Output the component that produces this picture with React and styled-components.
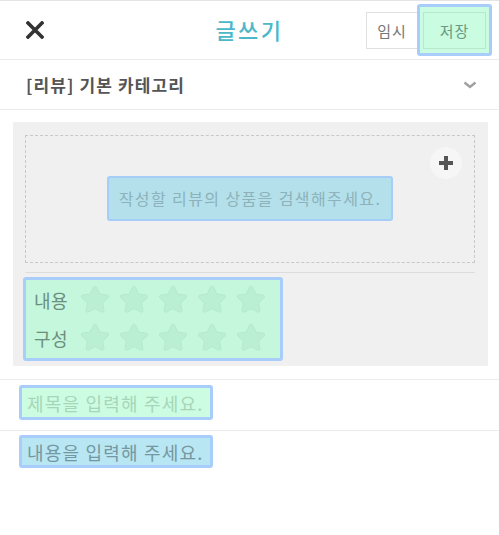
import React from "react";
import styled, { createGlobalStyle } from "styled-components";

const Global = createGlobalStyle`
  html, body { margin: 0; padding: 0; background: #fff; }
  body { font-family: "Noto Sans CJK KR", "Noto Sans", sans-serif; }
  * { box-sizing: border-box; }
`;

const Page = styled.div`
  width: 499px;
  background: #fff;
`;

const Header = styled.header`
  height: 60px;
  border-top: 1px solid #e4e4e4;
  border-bottom: 1px solid #ebebeb;
  display: grid;
  grid-template-columns: 1fr auto 1fr;
  align-items: center;
`;

const CloseButton = styled.button`
  justify-self: start;
  margin-left: 24px;
  width: 22px;
  height: 22px;
  padding: 0;
  border: 0;
  background: none;
  display: flex;
  align-items: center;
  justify-content: center;
`;

const Title = styled.h1`
  margin: 0 0 2px;
  font-size: 22px;
  font-weight: 500;
  color: #4ab8c9;
  letter-spacing: 2.5px;
`;

const Actions = styled.div`
  justify-self: end;
  margin-right: 7px;
  display: flex;
  align-items: center;
`;

const TempButton = styled.button`
  width: 51px;
  height: 37px;
  border: 1px solid #e0e0e0;
  border-right: 0;
  background: #fff;
  color: #777;
  font-family: inherit;
  font-size: 15px;
  letter-spacing: 1px;
  padding: 0;
`;

const SaveWrap = styled.div`
  width: 75px;
  height: 52px;
  border: 3px solid #a8cdfb;
  border-radius: 3px;
  background: #c9fce0;
  display: flex;
  align-items: center;
  justify-content: center;
`;

const SaveButton = styled.button`
  width: 63px;
  height: 37px;
  border: 1px solid #b7e8cc;
  background: transparent;
  color: #6a9a82;
  font-family: inherit;
  font-size: 15px;
  letter-spacing: 1px;
  padding: 0;
`;

const CategoryRow = styled.div`
  height: 50px;
  border-bottom: 1px solid #ececec;
  display: flex;
  align-items: center;
  justify-content: space-between;
  padding: 0 22px 0 26px;
`;

const CategoryText = styled.span`
  font-size: 17px;
  font-weight: 700;
  color: #555;
  letter-spacing: 1.1px;
`;

const Panel = styled.section`
  margin: 12px 11px 0 13px;
  padding: 13px 13px 5px 12px;
  background: #f0f0f0;
`;

const DropZone = styled.div`
  position: relative;
  height: 128px;
  border: 1px dashed #c8c8c8;
  display: flex;
  align-items: center;
  justify-content: center;
`;

const PlusButton = styled.button`
  position: absolute;
  top: 11px;
  right: 12px;
  width: 32px;
  height: 32px;
  border-radius: 50%;
  border: 0;
  padding: 0;
  background: #f6f6f6;
  display: flex;
  align-items: center;
  justify-content: center;
`;

const SearchBox = styled.div`
  width: 286px;
  height: 45px;
  margin-top: -2px;
  border: 2px solid #a5cdf8;
  border-radius: 3px;
  background: #b3e0ea;
  color: #8db2ba;
  font-size: 16px;
  letter-spacing: 1.4px;
  display: flex;
  align-items: center;
  justify-content: center;
`;

const Divider = styled.hr`
  margin: 9px 0 4px;
  border: 0;
  border-top: 1px solid #dcdcdc;
`;

const RatingBox = styled.div`
  width: 260px;
  margin-left: -2px;
  padding: 1px 0 1px 8px;
  border: 3px solid #a8cdfb;
  border-radius: 3px;
  background: #c4f7dc;
`;

const RatingRow = styled.div`
  height: 38px;
  display: flex;
  align-items: center;
`;

const RatingLabel = styled.span`
  width: 45px;
  font-size: 18px;
  letter-spacing: 0.5px;
  color: #6c8e7e;
`;

const Stars = styled.div`
  display: flex;
  gap: 5px;
  margin-left: -1px;
`;

const Field = styled.div`
  height: ${(p) => p.$h}px;
  margin-top: ${(p) => p.$mt || 0}px;
  border-top: 1px solid #ececec;
  padding: ${(p) => p.$pt}px 0 0 19px;
`;

const FieldHint = styled.div`
  display: inline-flex;
  align-items: center;
  height: ${(p) => p.$h}px;
  padding: 0 6px 0 5px;
  border: 3px solid #a8cdfb;
  border-radius: 3px;
  background: ${(p) => p.$bg};
  color: ${(p) => p.$color};
  font-size: 18px;
  letter-spacing: 1.2px;
`;

const Star = () => (
  <svg width="34" height="34" viewBox="0 0 24 24">
    <path
      d="M12 2.3c.5 0 .9.3 1.1.7l2.3 4.8 5.2.7c1 .1 1.3 1.3.6 2l-3.8 3.6.9 5.2c.2 1-.8 1.7-1.7 1.2L12 18l-4.6 2.5c-.9.5-1.9-.2-1.7-1.2l.9-5.2L2.8 10.5c-.7-.7-.4-1.9.6-2l5.2-.7L10.9 3c.2-.4.6-.7 1.1-.7z"
      fill="#bbefd3"
      stroke="#b3e6ca"
      strokeWidth="0.6"
    />
  </svg>
);

const StarRow = ({ label }) => (
  <RatingRow>
    <RatingLabel>{label}</RatingLabel>
    <Stars>
      {[0, 1, 2, 3, 4].map((i) => (
        <Star key={i} />
      ))}
    </Stars>
  </RatingRow>
);

export default function App() {
  return (
    <Page>
      <Global />
      <Header>
        <CloseButton aria-label="닫기">
          <svg width="18" height="18" viewBox="0 0 18 18">
            <path d="M2 2L16 16M16 2L2 16" stroke="#333" strokeWidth="3.6" strokeLinecap="square" />
          </svg>
        </CloseButton>
        <Title>글쓰기</Title>
        <Actions>
          <TempButton>임시</TempButton>
          <SaveWrap>
            <SaveButton>저장</SaveButton>
          </SaveWrap>
        </Actions>
      </Header>
      <CategoryRow>
        <CategoryText>[리뷰] 기본 카테고리</CategoryText>
        <svg width="14" height="8" viewBox="0 0 14 8">
          <path d="M1.5 1.5L7 6L12.5 1.5" stroke="#a0a0a0" strokeWidth="2.4" fill="none" />
        </svg>
      </CategoryRow>
      <Panel>
        <DropZone>
          <PlusButton aria-label="추가">
            <svg width="16" height="16" viewBox="0 0 16 16">
              <path d="M8 1V15M1 8H15" stroke="#555" strokeWidth="4" />
            </svg>
          </PlusButton>
          <SearchBox>작성할 리뷰의 상품을 검색해주세요.</SearchBox>
        </DropZone>
        <Divider />
        <RatingBox>
          <StarRow label="내용" />
          <StarRow label="구성" />
        </RatingBox>
      </Panel>
      <Field $h={51} $pt={5} $mt={13}>
        <FieldHint $h={35} $bg="#ccfce2" $color="#a6d6b8">제목을 입력해 주세요.</FieldHint>
      </Field>
      <Field $h={50} $pt={4}>
        <FieldHint $h={33} $bg="#b8e6f2" $color="#7497a1">내용을 입력해 주세요.</FieldHint>
      </Field>
    </Page>
  );
}
